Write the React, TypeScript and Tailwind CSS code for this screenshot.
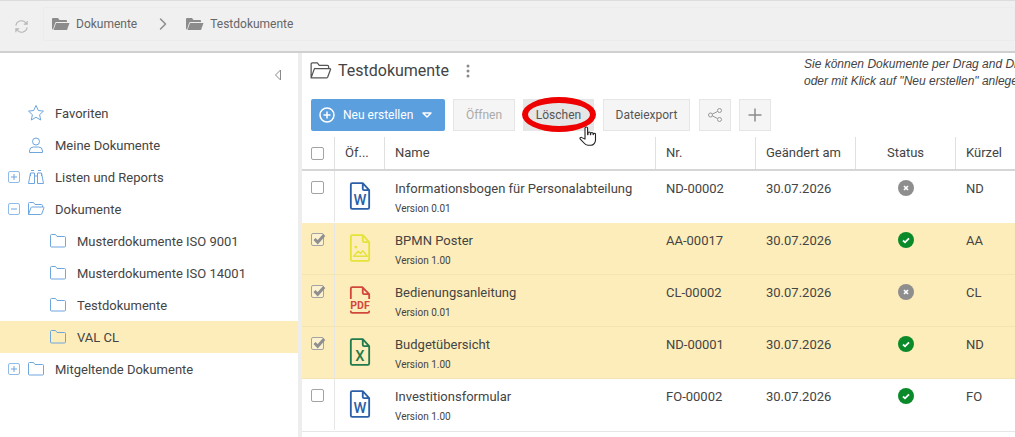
import { ChevronRight } from "lucide-react";

const docs = [
  { name: "Informationsbogen für Personalabteilung", version: "Version 0.01", nr: "ND-00002", status: "off", short: "ND", type: "word", sel: false },
  { name: "BPMN Poster", version: "Version 1.00", nr: "AA-00017", status: "ok", short: "AA", type: "image", sel: true },
  { name: "Bedienungsanleitung", version: "Version 0.01", nr: "CL-00002", status: "off", short: "CL", type: "pdf", sel: true },
  { name: "Budgetübersicht", version: "Version 1.00", nr: "ND-00001", status: "ok", short: "ND", type: "excel", sel: true },
  { name: "Investitionsformular", version: "Version 1.00", nr: "FO-00002", status: "ok", short: "FO", type: "word", sel: false },
];

const grid = "grid grid-cols-[33px_50px_271px_100px_100px_100px_100px]";

function Folder({ className, open }: { className?: string; open?: boolean }) {
  return (
    <svg viewBox="0 0 18 16" fill="none" stroke="currentColor" strokeWidth="1" className={className}>
      {open ? (
        <path d="M1.5 13.5V2.5a1 1 0 0 1 1-1h4l1.5 2h6.5a1 1 0 0 1 1 1v1.5M1.5 13.5l2.5-7a1 1 0 0 1 1-.5h11.5a.6.6 0 0 1 .5.8l-2.3 6.2a1 1 0 0 1-1 .5z" strokeLinejoin="round" />
      ) : (
        <path d="M1.5 13V2.5a1 1 0 0 1 1-1h4l1.5 2h7.5a1 1 0 0 1 1 1V13a1 1 0 0 1-1 1h-13a1 1 0 0 1-1-1z" strokeLinejoin="round" />
      )}
    </svg>
  );
}

function SolidFolder({ className }: { className?: string }) {
  return (
    <svg viewBox="0 0 18 14" className={className} fill="currentColor">
      <path d="M0 12V2a1 1 0 0 1 1-1h5l1.5 2H14a1 1 0 0 1 1 1v1H4.5a1.5 1.5 0 0 0-1.4 1L1 12.5z" />
      <path d="M4 6h13.5L15 13H1.5z" />
    </svg>
  );
}

function Toggle({ minus }: { minus?: boolean }) {
  return (
    <span className="flex h-[12px] w-[12px] items-center justify-center rounded-[2px] border border-[#8fbbe8] text-[#6ea6de]">
      <svg viewBox="0 0 10 10" className="h-[10px] w-[10px]" stroke="currentColor" strokeWidth="1">
        <path d="M2 5h6" />
        {!minus && <path d="M5 2v6" />}
      </svg>
    </span>
  );
}

function NavRow({ label, icon, toggle, child, active }: { label: string; icon: React.ReactNode; toggle?: "plus" | "minus"; child?: boolean; active?: boolean }) {
  return (
    <div className={`flex h-[32px] items-center ${child ? "pl-[49px]" : "pl-[8px]"} ${active ? "bg-[#fdedba]" : ""}`}>
      {!child && <span className="flex w-[19px] items-center">{toggle && <Toggle minus={toggle === "minus"} />}</span>}
      <span className="flex w-[28px] items-center text-[#6ea6de]">{icon}</span>
      <span className="pt-[1px] text-[13px] text-[#444]">{label}</span>
    </div>
  );
}

function FileIcon({ type }: { type: string }) {
  const color = { word: "#2b5fa8", image: "#e3e33a", pdf: "#d2483a", excel: "#1f7a4d" }[type] ?? "#333";
  if (type === "pdf") {
    return (
      <svg viewBox="0 0 24 32" className="h-[30px] w-[22px]" fill="none" stroke={color} strokeWidth="2">
        <path d="M2 15V3.500A1.500 1.500 0 0 1 3.500 2h11l7.500 7.500V15M15 2v6a1.500 1.500 0 0 0 1.500 1.500H22" strokeLinejoin="round" />
        <text x="12" y="25.500" textAnchor="middle" fontFamily="Roboto, sans-serif" fontWeight="700" fontSize="11.500" fill={color} stroke="none">PDF</text>
        <path d="M2 28.500c0 1 .7 1.500 1.500 1.500h17c.8 0 1.500-.5 1.500-1.500" strokeLinecap="round" />
      </svg>
    );
  }
  return (
    <svg viewBox="0 0 24 32" className="h-[30px] w-[22px]" fill="none" stroke={color} strokeWidth="2">
      <path d="M3.500 2H15l7 7.500V28.500A1.500 1.500 0 0 1 20.500 30h-17A1.500 1.500 0 0 1 2 28.500V3.500A1.500 1.500 0 0 1 3.500 2zM15 2v6a1.500 1.500 0 0 0 1.500 1.500H22" strokeLinejoin="round" />
      {type === "word" && <text x="12" y="26" textAnchor="middle" fontFamily="Roboto, sans-serif" fontWeight="500" fontSize="16" fill={color} stroke="none">W</text>}
      {type === "excel" && <text x="12" y="26" textAnchor="middle" fontFamily="Roboto, sans-serif" fontWeight="500" fontSize="16" fill={color} stroke="none">X</text>}
      {type === "image" && (
        <>
          <circle cx="7.500" cy="15" r="1.500" fill={color} stroke="none" />
          <path d="M5 25l5-5.500 2.500 2.500 2.500-3 5 6z" strokeWidth="1.500" strokeLinejoin="round" />
        </>
      )}
    </svg>
  );
}

function Check({ checked }: { checked?: boolean }) {
  return (
    <span className="relative block h-[13px] w-[13px] rounded-[2px] border border-[#a3a3a3] bg-white/30">
      {checked && (
        <svg viewBox="0 0 14 14" className="absolute left-[0px] top-[-2px] h-[14px] w-[14px]" fill="none" stroke="#8f8f8f" strokeWidth="3">
          <path d="M2.500 7l3.200 3.200 6.500-7.200" />
        </svg>
      )}
    </span>
  );
}

function StatusIcon({ status }: { status: string }) {
  return status === "ok" ? (
    <span className="flex h-[16px] w-[16px] items-center justify-center rounded-full bg-[#0b8a2a]">
      <svg viewBox="0 0 10 10" className="h-[10px] w-[10px]" fill="none" stroke="#fff" strokeWidth="1.800">
        <path d="M2 5.500l2 1.800 4-4" />
      </svg>
    </span>
  ) : (
    <span className="flex h-[16px] w-[16px] items-center justify-center rounded-full bg-[#8e8e8e]">
      <svg viewBox="0 0 10 10" className="h-[8px] w-[8px]" fill="none" stroke="#fff" strokeWidth="2">
        <path d="M2.500 2.500l5 5M7.500 2.500l-5 5" />
      </svg>
    </span>
  );
}

function ToolButton({ children, className }: { children: React.ReactNode; className: string }) {
  return <div className={`flex h-[32px] items-center justify-center border border-[#e6e6e6] bg-[#f5f5f5] text-[12px] text-[#555] ${className}`}>{children}</div>;
}

export default function App() {
  return (
    <div className="flex h-[437px] w-[1015px] flex-col overflow-hidden bg-white font-['Roboto',sans-serif]">
      {/* top bar */}
      <div className="flex h-[53px] shrink-0 items-start border-t border-b-2 border-t-[#dcdcdc] border-b-[#cfcfcf] bg-[#f0f0f0] pt-[6px]">
        <div className="flex w-[43px] justify-center pt-[12px] text-[#b5b5b5]">
          <svg viewBox="0 0 16 16" className="ml-[-1px] h-[15px] w-[15px]" fill="none" stroke="currentColor" strokeWidth="1.200">
            <path d="M2 7a6 6 0 0 1 10.500-3l1.500 1.500M14 2v3.500h-3.500M14 9a6 6 0 0 1-10.500 3L2 10.500M2 14v-3.500h3.500" />
          </svg>
        </div>
        <div className="flex h-[34px] flex-1 items-center border border-[#ececec] pl-[8px] text-[12px] text-[#666]">
          <SolidFolder className="h-[14px] w-[18px] text-[#8c8c8c]" />
          <span className="ml-[6px]">Dokumente</span>
          <ChevronRight className="ml-[16px] h-[20px] w-[20px] text-[#8c8c8c]" strokeWidth={1.800} />
          <SolidFolder className="ml-[13px] h-[14px] w-[18px] text-[#8c8c8c]" />
          <span className="ml-[6px]">Testdokumente</span>
        </div>
      </div>

      <div className="flex min-h-0 flex-1">
        {/* sidebar */}
        <div className="w-[298px] shrink-0">
          <div className="flex h-[44px] items-end justify-end pb-[16px] pr-[16px]">
            <svg viewBox="0 0 8 12" className="h-[12px] w-[8px]" fill="none" stroke="#8a8a8a">
              <path d="M6.500 1v10L1.500 6z" />
            </svg>
          </div>
          <NavRow
            label="Favoriten"
            icon={
              <svg viewBox="0 0 18 18" className="h-[18px] w-[18px]" fill="none" stroke="currentColor" strokeWidth="1">
                <path d="M9 1.500l2.300 5 5.200.6-3.900 3.600 1.100 5.300L9 13.300 4.300 16l1.100-5.300L1.500 7.100l5.200-.6z" strokeLinejoin="round" />
              </svg>
            }
          />
          <NavRow
            label="Meine Dokumente"
            icon={
              <svg viewBox="0 0 18 18" className="h-[18px] w-[18px]" fill="none" stroke="currentColor" strokeWidth="1">
                <circle cx="9" cy="5.500" r="3.500" />
                <path d="M2.500 16.500v-1.500a4 4 0 0 1 4-4h5a4 4 0 0 1 4 4v1.500z" />
              </svg>
            }
          />
          <NavRow
            label="Listen und Reports"
            toggle="plus"
            icon={
              <svg viewBox="0 0 18 16" className="h-[16px] w-[18px]" fill="none" stroke="currentColor" strokeWidth="1">
                <path d="M4 1.500h3M11 1.500h3M3.500 4h4v10.500h-6zM10.500 4h4l2 10.500h-6zM7.500 7h3M3.500 4v3M14.500 4v3" />
              </svg>
            }
          />
          <NavRow label="Dokumente" toggle="minus" icon={<Folder open className="h-[16px] w-[18px]" />} />
          <NavRow child label="Musterdokumente ISO 9001" icon={<Folder className="h-[16px] w-[18px]" />} />
          <NavRow child label="Musterdokumente ISO 14001" icon={<Folder className="h-[16px] w-[18px]" />} />
          <NavRow child label="Testdokumente" icon={<Folder className="h-[16px] w-[18px]" />} />
          <NavRow child active label="VAL CL" icon={<Folder className="h-[16px] w-[18px]" />} />
          <NavRow label="Mitgeltende Dokumente" toggle="plus" icon={<Folder className="h-[16px] w-[18px]" />} />
        </div>

        {/* main */}
        <div className="min-w-0 flex-1 border-l-[4px] border-l-[#ededed]">
          <div className="relative h-[46px] pl-[7px]">
            <div className="flex items-center pt-[6px] text-[16px] text-[#444]">
              <Folder open className="h-[20px] w-[23px] text-[#555]" />
              <span className="ml-[6px]">Testdokumente</span>
              <svg viewBox="0 0 4 14" className="ml-[17px] h-[14px] w-[4px]" fill="#8a8a8a">
                <circle cx="2" cy="2" r="1.500" />
                <circle cx="2" cy="7" r="1.500" />
                <circle cx="2" cy="12" r="1.500" />
              </svg>
            </div>
            <div className="absolute left-[502px] top-[3px] whitespace-nowrap font-['Liberation_Sans',sans-serif] text-[12px] italic leading-[17px] text-[#444]">
              <div>Sie können Dokumente per Drag and Drop hochladen</div>
              <div>oder mit Klick auf "Neu erstellen" anlegen.</div>
            </div>
          </div>

          {/* toolbar */}
          <div className="relative flex h-[38px] items-start pl-[9px]">
            <div className="flex h-[32px] w-[134px] items-center rounded-[2px] bg-[#5c9fdf] pl-[8px] text-[12px] text-white">
              <svg viewBox="0 0 16 16" className="h-[16px] w-[16px]" fill="none" stroke="#fff" strokeWidth="1.500">
                <circle cx="8" cy="8" r="7" />
                <path d="M8 4.500v7M4.500 8h7" />
              </svg>
              <span className="ml-[8px]">Neu erstellen</span>
              <svg viewBox="0 0 10 6" className="ml-[9px] h-[6px] w-[10px]" fill="none" stroke="#fff" strokeWidth="1.500">
                <path d="M1 1h8L5 5z" strokeLinejoin="round" />
              </svg>
            </div>
            <ToolButton className="ml-[8px] w-[62px] !text-[#aaa]">Öffnen</ToolButton>
            <ToolButton className="ml-[8px] w-[71px] !bg-[#e6e6e6]">Löschen</ToolButton>
            <ToolButton className="ml-[9px] w-[87px]">Dateiexport</ToolButton>
            <ToolButton className="ml-[9px] w-[32px]">
              <svg viewBox="0 0 16 16" className="h-[16px] w-[16px]" fill="none" stroke="#999" strokeWidth="1">
                <circle cx="3.500" cy="8" r="2" />
                <circle cx="12.500" cy="3.500" r="2" />
                <circle cx="12.500" cy="12.500" r="2" />
                <path d="M5.300 7.100l5.400-2.700M5.300 8.900l5.400 2.700" />
              </svg>
            </ToolButton>
            <ToolButton className="ml-[8px] w-[32px]">
              <svg viewBox="0 0 14 14" className="h-[14px] w-[14px]" fill="none" stroke="#8c8c8c" strokeWidth="1.500">
                <path d="M7 0.500v13M0.500 7h13" />
              </svg>
            </ToolButton>
            {/* red marker and cursor */}
            <div className="absolute left-[220px] top-[-2px] h-[35px] w-[74px] rounded-[50%] border-[6px] border-[#ee0000]" />
            <svg viewBox="0 0 18 24" preserveAspectRatio="none" className="absolute left-[277px] top-[27px] h-[21px] w-[18px]" fill="#fff" stroke="#222" strokeWidth="1.100" strokeLinejoin="round">
              <path d="M6 2.500a1.300 1.300 0 0 1 2.600 0V10h.4V8a1.200 1.200 0 0 1 2.400 0v2h.3V8.700a1.200 1.200 0 0 1 2.400 0V10h.2V9.500a1.100 1.100 0 0 1 2.200 0V16c0 3-2 6-4.500 6H9c-2 0-3-1-4-2.500L1.300 15c-1-1.300.5-2.700 1.700-1.800L6 15z" />
            </svg>
          </div>

          {/* header */}
          <div className={`${grid} h-[34px] items-center border-b-2 border-b-[#d6d6d6] text-[13px] text-[#444]`}>
            <div className="flex h-full items-center justify-center border-r border-r-[#e0e0e0]">
              <span className="ml-[-1px]"><Check /></span>
            </div>
            <div className="flex h-full items-center border-r border-r-[#e0e0e0] pl-[10px]">Öf...</div>
            <div className="flex h-full items-center border-r border-r-[#e0e0e0] pl-[10px]">Name</div>
            <div className="flex h-full items-center border-r border-r-[#e0e0e0] pl-[10px]">Nr.</div>
            <div className="flex h-full items-center border-r border-r-[#e0e0e0] pl-[10px]">Geändert am</div>
            <div className="flex h-full items-center justify-center border-r border-r-[#e0e0e0]">Status</div>
            <div className="flex h-full items-center pl-[10px]">Kürzel</div>
          </div>

          {/* rows */}
          {docs.map((d) => (
            <div key={d.nr} className={`${grid} h-[52px] border-b text-[13px] text-[#444] ${d.sel ? "border-b-[#f3e4b4] bg-[#fdedba]" : "border-b-white bg-white"}`}>
              <div className="flex justify-center border-r border-r-[#e6e6e6] pt-[10px]">
                <span className="ml-[-1px]"><Check checked={d.sel} /></span>
              </div>
              <div className="flex justify-center pt-[10px]">
                <FileIcon type={d.type} />
              </div>
              <div className="pl-[10px] pt-[9px]">
                <div className="leading-[18px]">{d.name}</div>
                <div className="mt-[4px] text-[10px] leading-[14px]">{d.version}</div>
              </div>
              <div className="pl-[10px] pt-[9px] leading-[18px]">{d.nr}</div>
              <div className="pl-[10px] pt-[9px] leading-[18px]">30.07.2026</div>
              <div className="flex justify-center pt-[9px]">
                <StatusIcon status={d.status} />
              </div>
              <div className="pl-[10px] pt-[9px] leading-[18px]">{d.short}</div>
            </div>
          ))}
          <div className="border-t border-t-[#e6e6e6]" />
        </div>
      </div>
    </div>
  );
}
